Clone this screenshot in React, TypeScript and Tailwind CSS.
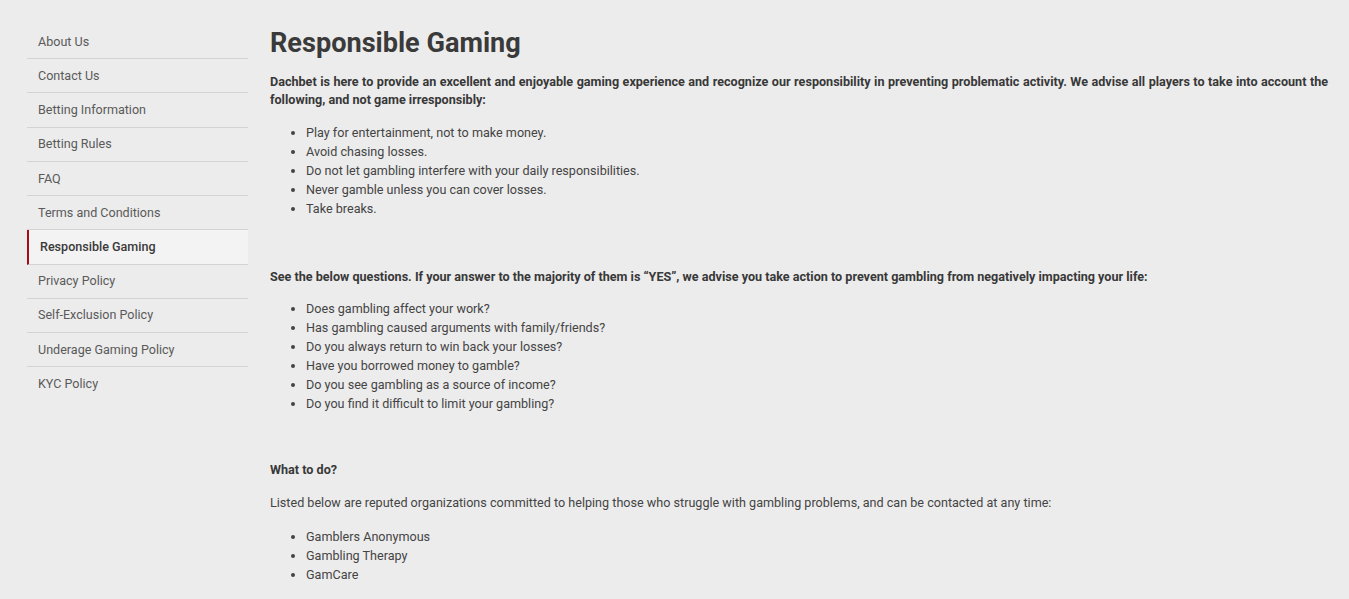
import React from "react";

const nav = [
  "About Us",
  "Contact Us",
  "Betting Information",
  "Betting Rules",
  "FAQ",
  "Terms and Conditions",
  "Responsible Gaming",
  "Privacy Policy",
  "Self-Exclusion Policy",
  "Underage Gaming Policy",
  "KYC Policy",
];

const list1 = [
  "Play for entertainment, not to make money.",
  "Avoid chasing losses.",
  "Do not let gambling interfere with your daily responsibilities.",
  "Never gamble unless you can cover losses.",
  "Take breaks.",
];

const list2 = [
  "Does gambling affect your work?",
  "Has gambling caused arguments with family/friends?",
  "Do you always return to win back your losses?",
  "Have you borrowed money to gamble?",
  "Do you see gambling as a source of income?",
  "Do you find it difficult to limit your gambling?",
];

const list3 = ["Gamblers Anonymous", "Gambling Therapy", "GamCare"];

function Bullets({ items, className = "" }: { items: string[]; className?: string }) {
  return (
    <ul className={`list-disc pl-[36px] text-[12.6px] leading-[19px] text-[#444] ${className}`}>
      {items.map((t) => (
        <li key={t} className="pl-0 marker:text-[#444]">
          {t}
        </li>
      ))}
    </ul>
  );
}

export default function App() {
  return (
    <div
      className="min-h-[599px] w-full bg-[#ececec] text-[#333]"
      style={{ fontFamily: "Roboto, 'Liberation Sans', sans-serif" }}
    >
      <div className="flex pl-[27px] pr-[21px] pt-[25px]">
        <aside className="w-[221px] shrink-0">
          {nav.map((n, i) => {
            const active = n === "Responsible Gaming";
            const last = i === nav.length - 1;
            return (
              <div
                key={n}
                className={`flex h-[34.22px] items-center pt-[1px] text-[12.55px] ${
                  last ? "" : "border-b border-[#d3d3d3]"
                } ${
                  active
                    ? "border-l-2 border-l-[#a50d14] bg-[#f3f3f3] pl-[11px] font-medium text-[#3a3a3a]"
                    : "pl-[11px] text-[#5a5a5a]"
                }`}
              >
                {n}
              </div>
            );
          })}
        </aside>
        <main className="ml-[22px] flex-1">
          <h1 className="mt-[1px] text-[27.1px] font-bold leading-[34px] text-[#3a3a3a]">
            Responsible Gaming
          </h1>
          <p className="mt-[13px] text-justify text-[12.6px] font-bold leading-[18px] text-[#383838]">
            Dachbet is here to provide an excellent and enjoyable gaming experience and recognize our
            responsibility in preventing problematic activity. We advise all players to take into
            account the following, and not game irresponsibly:
          </p>
          <Bullets items={list1} className="mt-[13.5px]" />
          <p className="mt-[50px] text-justify text-[12.6px] font-bold leading-[18px] text-[#383838]">
            See the below questions. If your answer to the majority of them is “YES”, we advise you
            take action to prevent gambling from negatively impacting your life:
          </p>
          <Bullets items={list2} className="mt-[13px]" />
          <p className="mt-[48px] text-[12.6px] font-bold leading-[18px] text-[#383838]">
            What to do?
          </p>
          <p className="mt-[15px] text-justify text-[12.6px] leading-[18px] text-[#444]">
            Listed below are reputed organizations committed to helping those who struggle with
            gambling problems, and can be contacted at any time:
          </p>
          <Bullets items={list3} className="mt-[15.5px]" />
        </main>
      </div>
    </div>
  );
}
